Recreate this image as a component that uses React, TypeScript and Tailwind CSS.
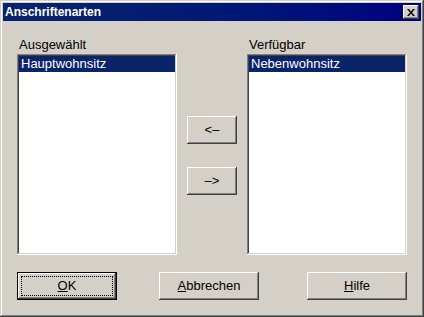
import React from 'react';

const raisedWindow =
  'shadow-[inset_-1px_-1px_#404040,inset_1px_1px_#d4d0c8,inset_-2px_-2px_#808080,inset_2px_2px_#ffffff]';
const raisedButton =
  'shadow-[inset_-1px_-1px_#404040,inset_1px_1px_#ffffff,inset_-2px_-2px_#808080,inset_2px_2px_#d4d0c8]';
const sunken =
  'shadow-[inset_-1px_-1px_#ffffff,inset_1px_1px_#808080,inset_-2px_-2px_#d4d0c8,inset_2px_2px_#404040]';

function ListBox({ items }: { items: string[] }) {
  return (
    <div className={`w-[160px] h-[201px] bg-white p-[2px] ${sunken}`}>
      {items.map((item, i) => (
        <div
          key={item}
          className={`h-[16px] pl-[2px] leading-[16px] text-[13px] ${
            i === 0 ? 'bg-[#0a246a] text-white' : 'text-black'
          }`}
        >
          {item}
        </div>
      ))}
    </div>
  );
}

function Button({
  children,
  isDefault = false,
  className = '',
}: {
  children: React.ReactNode;
  isDefault?: boolean;
  className?: string;
}) {
  if (isDefault) {
    return (
      <div className={`w-[100px] h-[28px] border border-black ${className}`}>
        <div className={`w-full h-full p-[3px] ${raisedButton}`}>
          <div className="w-full h-full border border-dotted border-black flex items-center justify-center text-[13px] text-black">
            {children}
          </div>
        </div>
      </div>
    );
  }
  return (
    <div
      className={`h-[28px] flex items-center justify-center text-[13px] text-black ${raisedButton} ${className}`}
    >
      {children}
    </div>
  );
}

export default function App() {
  return (
    <div
      className={`w-[424px] h-[317px] bg-[#d4d0c8] p-[3px] flex flex-col font-['Liberation_Sans',Arial,sans-serif] select-none ${raisedWindow}`}
    >
      {/* title bar */}
      <div className="h-[18px] flex items-center pl-[2px] pr-[2px] bg-linear-to-r from-[#0a246a] to-[#000080]">
        <span className="flex-1 text-white font-bold text-[12px] leading-[18px]">Anschriftenarten</span>
        <div className={`w-[16px] h-[14px] bg-[#d4d0c8] flex items-center justify-center ${raisedButton}`}>
          <svg width="8" height="7" viewBox="0 0 8 7">
            <path d="M0 0h2l2 2.5L6 0h2L5 3.5 8 7H6L4 4.5 2 7H0l3-3.5z" fill="#000" />
          </svg>
        </div>
      </div>

      {/* content */}
      <div className="flex-1 px-[14px] pt-[16px]">
        <div className="flex">
          <div className="flex flex-col">
            <div className="h-[17px] pl-[2px] text-[13px] leading-[15px] text-black">Ausgewählt</div>
            <ListBox items={['Hauptwohnsitz']} />
          </div>

          <div className="ml-[10px] pt-[79px] flex flex-col">
            <Button className="w-[50px] h-[27px]">&lt;–</Button>
            <Button className="w-[50px] h-[27px] mt-[23px]">–&gt;</Button>
          </div>

          <div className="ml-[10px] flex flex-col">
            <div className="h-[17px] pl-[2px] text-[13px] leading-[15px] text-black">Verfügbar</div>
            <ListBox items={['Nebenwohnsitz']} />
          </div>
        </div>

        <div className="flex mt-[17px]">
          <Button isDefault>
            <span>
              <span className="underline">O</span>K
            </span>
          </Button>
          <Button className="w-[100px] ml-[42px]">
            <span>
              <span className="underline">A</span>bbrechen
            </span>
          </Button>
          <Button className="w-[100px] ml-[48px]">
            <span>
              <span className="underline">H</span>ilfe
            </span>
          </Button>
        </div>
      </div>
    </div>
  );
}
